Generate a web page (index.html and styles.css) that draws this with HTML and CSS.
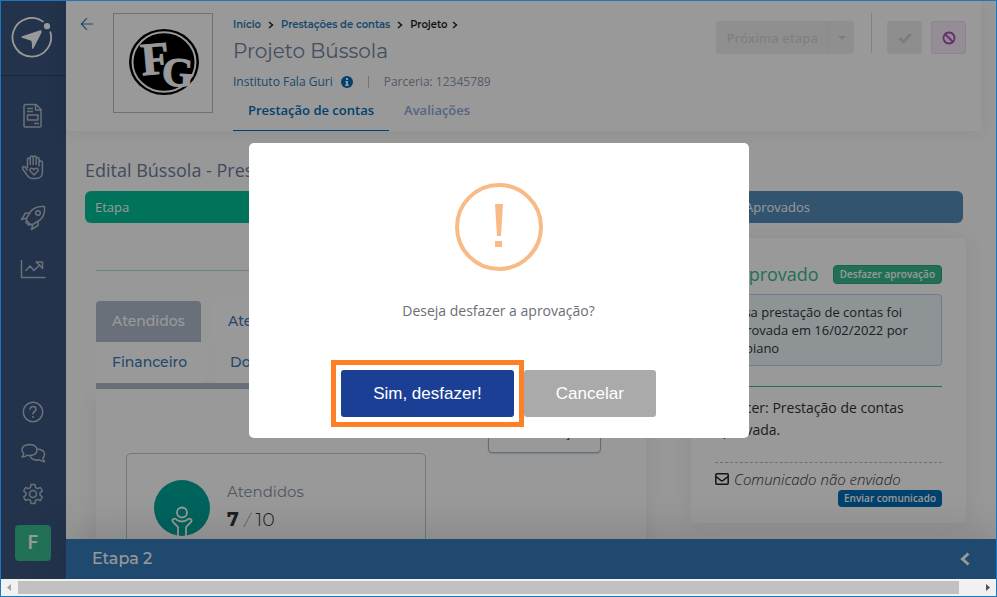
FILE: index.html
```html
<!DOCTYPE html>
<html lang="pt-BR">
<head>
<meta charset="utf-8">
<meta name="viewport" content="width=device-width, initial-scale=1">
<title>Projeto Bússola</title>
<link rel="stylesheet" href="styles.css">
</head>
<body>
<div class="app">
  <nav class="sidebar" aria-label="Menu principal">
    <a class="brand" href="#" aria-label="Página inicial">
      <svg width="42" height="42" viewBox="0 0 42 42" fill="none">
        <path d="M32.500 4.900A19.300 19.300 0 1 0 39.200 14.400" stroke="#fff" stroke-width="1.800"/>
        <circle cx="36" cy="9.200" r="3.100" fill="#fff"/>
        <path d="M29.300 13.300 11 19.200q-1.300.8 0 1.500l8.500 2.800q1.200.6 1.300 2l.3 5.800q.3 1.400 1.300.3l8.100-15.800q.7-3-1.200-2.500z" fill="#fff"/>
      </svg>
    </a>
    <div class="menu">
      <a href="#" aria-label="Editais"><svg width="26" height="26" viewBox="0 0 26 26"><path d="M5.500 1.500h10.500l5 5v16.500q0 1-1 1H5q-1 0-1-1V3q0-1.500 1.500-1.500zM15.500 2v5h5M7 5.500h6M7 8.500h6M7.500 12h10.500v5H7.500zM14 20.500h5"/></svg></a>
      <a href="#" aria-label="Doações"><svg width="26" height="26" viewBox="0 0 26 26"><path d="M7.500 14V5.500q0-1.500 1.400-1.500t1.400 1.500V11M10.300 10V3.500Q10.300 2 11.700 2t1.500 1.500V11M13.200 10V3.500Q13.200 2 14.700 2t1.500 1.500V11M16.200 10V5q0-1.500 1.400-1.500T19 5v7V8.500q0-1.500 1.700-1.500T22.400 8.500V18q0 6.500-6.500 6.500h-3Q9 24.500 7 21L3 15.500q-1-2.500.6-3 1.400-.2 2.400 1.500l1.500 2.500M14 21l-3.700-3.700q-1.300-2 .6-3 1.800-.4 3.100 1.400 1.300-1.800 3.100-1.400 1.900 1 .6 3z"/></svg></a>
      <a href="#" aria-label="Projetos"><svg width="26" height="26" viewBox="0 0 26 26"><path d="M24.500 1.500q-9-.7-13.500 4.500L7 12.500l-1 5 2.500 2.500 5-1L20 15q5.200-4.500 4.500-13.500zM10 8H5.500L1.500 14.500 7 13M18 16v4.500L11.500 24.500 13 19M6.500 15.500l4 4"/><circle cx="18" cy="8" r="2.300"/></svg></a>
      <a href="#" aria-label="Indicadores"><svg width="26" height="26" viewBox="0 0 26 26"><path d="M1.500 4v17.500H25.500M5.500 15l4.500-5 4 4.500 6-6M16 6h6.500v6.500L19.500 9z"/></svg></a>
    </div>
    <div class="menu menu-bottom">
      <a href="#" aria-label="Ajuda"><svg width="26" height="26" viewBox="0 0 26 26"><circle cx="13" cy="13" r="9.700"/><path d="M10 10.800q0-3.300 3-3.300t3 2.700q0 1.500-1.500 2.300T13 14.500v1M13 17v2"/></svg></a>
      <a href="#" aria-label="Conversas"><svg width="26" height="26" viewBox="0 0 26 26"><path d="M2 17q1.600-1.500 1.700-3.500Q2 12 2 10q0-5.200 7.500-5.500Q17 4.800 17 10t-7.500 5.500q-1.300 0-2.600-.3Q5 17 2 17zM17 9q7.500.5 7.500 5.500 0 2-1.700 3.500.2 2.200 1.700 3.700-3 0-5-1.900-7.500 1.500-9.500-4"/></svg></a>
      <a href="#" aria-label="Configurações"><svg width="26" height="26" viewBox="0 0 26 26"><circle cx="13" cy="13" r="3.500"/><path d="M11 3.500h4l.5 3 2 1.100 2.900-1.100 2 3.500-2.400 1.900v2.200l2.400 1.900-2 3.500-2.900-1.100-2 1.100-.5 3h-4l-.5-3-2-1.100-2.900 1.100-2-3.500L6 14.100v-2.200L3.600 10l2-3.500 2.900 1.100 2-1.100z"/></svg></a>
      <button class="avatar" type="button">F</button>
    </div>
  </nav>

  <main class="main">
    <header class="header">
      <a class="back" href="#" aria-label="Voltar"><svg width="14" height="14" viewBox="0 0 14 14"><path d="M13 7H1.500M7 1.200 1.300 7 7 12.800"/></svg></a>
      <div class="org-logo">
        <svg width="72" height="68" viewBox="0 0 72 68">
          <ellipse cx="37" cy="33" rx="35" ry="33" fill="#000"/>
          <ellipse cx="37" cy="33" rx="31.500" ry="29.800" fill="none" stroke="#fff" stroke-width="2"/>
          <text class="logo-letter" x="14" y="45" font-size="46" transform="rotate(-5 28 30)">F</text>
          <text class="logo-letter" x="35" y="57" font-size="41" transform="rotate(3 50 44)">G</text>
        </svg>
      </div>
      <div class="project">
        <div class="crumbs">
          <a href="#">Início</a>
          <svg width="6" height="8" viewBox="0 0 6 8"><path d="m1 1 3.500 3L1 7"/></svg>
          <a href="#">Prestações de contas</a>
          <svg width="6" height="8" viewBox="0 0 6 8"><path d="m1 1 3.500 3L1 7"/></svg>
          <span class="current">Projeto <svg width="6" height="8" viewBox="0 0 6 8"><path d="m1 1 3.500 3L1 7"/></svg></span>
        </div>
        <h1>Projeto Bússola</h1>
        <div class="meta">
          <a href="#">Instituto Fala Guri</a>
          <svg width="12" height="12" viewBox="0 0 12 12"><circle cx="6" cy="6" r="6" fill="#006db8"/><path d="M5 2h2v2H5zM4.500 5H7v3.500h.8V10H4.200V8.500H5v-2h-.5z" fill="#fff"/></svg>
          <span class="sep"></span>
          <span class="partner">Parceria: 12345789</span>
        </div>
        <div class="tabs">
          <a class="tab active" href="#">Prestação de contas</a>
          <a class="tab" href="#">Avaliações</a>
        </div>
      </div>
      <div class="actions">
        <div class="split">
          <button type="button" disabled>Próxima etapa</button>
          <button type="button" class="caret" disabled aria-label="Mais opções"><svg width="8" height="4" viewBox="0 0 8 4"><path d="M0 0h8L4 4z" fill="#d0d0d0"/></svg></button>
        </div>
        <span class="rule"></span>
        <button class="square" type="button" disabled aria-label="Aprovar"><svg width="14" height="12" viewBox="0 0 14 12"><path d="m1.500 6 4 4 7-8" fill="none" stroke="#d0d0d0" stroke-width="3"/></svg></button>
        <button class="square ban" type="button" aria-label="Reprovar"><svg width="14" height="14" viewBox="0 0 14 14"><path d="M7 1.500a5.500 5.500 0 1 0 .01 0zM3 3l8 8" fill="none" stroke="#a552b8" stroke-width="1.800"/></svg></button>
      </div>
    </header>

    <section class="content">
      <h2>Edital Bússola - Prestação de contas</h2>
      <div class="steps">
        <div class="step done">Etapa</div>
        <div class="step">Aprovados</div>
      </div>
      <div class="columns">
        <div class="left">
          <div class="subtabs">
            <a class="subtab selected" href="#">Atendidos</a>
            <a class="subtab" href="#">Atendimentos</a>
          </div>
          <div class="subtabs second">
            <a class="subtab" href="#">Financeiro</a>
            <a class="subtab" href="#">Documentos</a>
          </div>
          <div class="panel">
            <button class="request" type="button">Ver avaliação</button>
            <div class="stat">
              <svg width="56" height="56" viewBox="0 0 56 56"><circle cx="28" cy="28" r="28" fill="#00a59a"/><g fill="none" stroke="#fff" stroke-width="1.800"><circle cx="28" cy="32.500" r="5"/><path d="M24 56V47l-5-5q-1.500-2 .5-3t3.500 1q5 3 10 0 1.500-2 3.500-1t.5 3l-5 5v9"/></g></svg>
              <div>
                <div class="stat-name">Atendidos</div>
                <div class="stat-value"><b>7</b><i>/</i><span>10</span></div>
              </div>
            </div>
          </div>
        </div>
        <aside class="review">
          <div class="review-head"><h3>Aprovado</h3><button class="mini green" type="button">Desfazer aprovação</button></div>
          <p class="notice">Essa prestação de contas foi aprovada em 16/02/2022 por Fabiano</p>
          <p class="opinion">Parecer: Prestação de contas aprovada.</p>
          <div class="mail"><svg width="14" height="12" viewBox="0 0 14 12"><path d="M1.800.8h10.400q1 0 1 1v8.400q0 1-1 1H1.800q-1 0-1-1V1.800q0-1 1-1zM1 3.500l4.800 3.800q1.200.9 2.400 0L13 3.500"/></svg><em>Comunicado não enviado</em></div>
          <button class="mini send" type="button">Enviar comunicado</button>
        </aside>
      </div>
    </section>

    <button class="next-stage" type="button"><span>Etapa 2</span><svg width="10" height="14" viewBox="0 0 10 14"><path d="M8.500 1.500 2.500 7l6 5.500" fill="none" stroke="#fff" stroke-width="3"/></svg></button>
  </main>

  <div class="overlay">
    <div class="modal" role="dialog" aria-modal="true" aria-labelledby="question">
      <div class="warning"><svg width="88" height="88" viewBox="0 0 88 88"><circle cx="44" cy="44" r="42" fill="none" stroke="#f8bb86" stroke-width="4"/><path d="M40 21h8l-2 32h-4zM40 58h7v6h-7z" fill="#f8bb86"/></svg></div>
      <p id="question">Deseja desfazer a aprovação?</p>
      <div class="choices">
        <span class="highlight"><button class="confirm" type="button">Sim, desfazer!</button></span>
        <button class="cancel" type="button">Cancelar</button>
      </div>
    </div>
  </div>
</div>
<div class="scrollbar" aria-hidden="true">
  <svg width="17" height="17" viewBox="0 0 17 17"><path d="M10 5v7L6 8.500z" fill="#a3a3a3"/></svg>
  <span class="thumb"></span>
  <svg width="17" height="17" viewBox="0 0 17 17"><path d="M7 5v7l4-3.500z" fill="#505050"/></svg>
</div>
</body>
</html>
```
FILE: styles.css
```css
* { box-sizing: border-box; }
html, body { height: 100%; }
body {
  --display: Montserrat, Inter, sans-serif;
  margin: 0;
  display: flex;
  flex-direction: column;
  border: 1px solid #1b78bf;
  overflow: hidden;
  font: 13px/18px "Open Sans", sans-serif;
  color: #333;
  background: #fdfdfd;
}
a { color: inherit; text-decoration: none; }
button { font: inherit; color: inherit; border: 0; padding: 0; cursor: pointer; }
h1, h2, h3, p { margin: 0; font-weight: 400; }
svg { display: block; flex: none; }

.app { position: relative; flex: 1; min-height: 0; display: flex; overflow: hidden; }

.sidebar { flex: none; width: 65px; display: flex; flex-direction: column; align-items: stretch; background: #39557d; }
.brand { height: 75px; display: flex; align-items: center; justify-content: center; padding-right: 3px; border-bottom: 1px solid #2b4266; }
.menu { display: flex; flex-direction: column; align-items: center; gap: 25px; padding: 27px 1px 0 0; }
.menu svg { fill: none; stroke: #b3bccb; stroke-width: 1.5; stroke-linejoin: round; }
.menu-bottom { margin-top: auto; gap: 15px; padding: 0 1px 18px 0; }
.avatar { width: 36px; height: 36px; margin-top: 3px; border-radius: 4px; background: #38bd92; color: #fff; font: 600 18px/36px Inter, sans-serif; }

.main { flex: 1; min-width: 0; display: flex; flex-direction: column; }
.header { position: relative; flex: none; display: flex; align-items: flex-start; margin-right: 15px; padding: 12px 15px 0 14px; background: #fff; box-shadow: 0 0 18px rgba(0, 0, 0, .07); }
.back { margin: 4px 19px 0 0; }
.back svg { fill: none; stroke: #2f80bf; stroke-width: 1.2; }
.org-logo { flex: none; width: 100px; height: 100px; display: flex; align-items: center; justify-content: center; border: 1px solid #bbb; }
.logo-letter { font-family: "Liberation Serif", serif; font-weight: 700; fill: #fff; stroke: #fff; stroke-width: 1; }
.project { margin-left: 20px; white-space: nowrap; }
.crumbs { display: flex; align-items: center; gap: 7px; height: 24px; font: 600 10px/24px var(--display); color: #2c79b5; }
.crumbs svg, .mail svg { fill: none; stroke: #222; stroke-width: 1.5; }
.crumbs .current { display: flex; align-items: center; gap: 4px; color: #222; }
h1 { font: 400 20px/28px var(--display); color: #7083a0; }
.meta { display: flex; align-items: center; height: 34px; gap: 8px; font-size: 12px; color: #2c79b5; }
.sep { width: 1px; height: 12px; margin: 0 7px; background: #bcc4d0; }
.partner { color: #8d99ae; }
.tabs { display: flex; font-weight: 600; }
.tab { height: 32px; padding: 2px 15px 0; color: #8ea9d8; }
.tab.active { color: #006db8; border-bottom: 1px solid #006db8; }
.actions { display: flex; align-items: flex-start; margin-left: auto; }
.split { display: flex; margin-top: 8px; height: 33px; border-radius: 3px; background: #efefef; overflow: hidden; }
.split button { padding: 0 10px 0 11px; font-weight: 600; color: #d6d6d6; background: none; }
.split .caret { width: 26px; padding: 0 9px; border-left: 1px solid #e4e4e4; }
.rule { width: 1px; height: 40px; margin: 0 15px 0 17px; background: #d9d9d9; }
.square { width: 35px; height: 33px; margin-top: 8px; display: flex; align-items: center; justify-content: center; border-radius: 3px; background: #ededed; }
.ban { margin-left: 9px; background: #f8ebfa; border: 1px solid #eadcee; }

.content { flex: 1; min-height: 0; padding: 27px 30px 0 19px; overflow: hidden; }
h2 { font-size: 18px; line-height: 24px; color: #6c7f9a; }
.steps { display: flex; margin: 9px 3px 0 0; color: #fff; }
.step { width: 228px; padding: 7px 10px; border-radius: 6px; background: #548cba; }
.step.done { flex: 1; margin-right: 10px; background: #00c096; }
.columns { display: flex; align-items: flex-start; gap: 45px; margin-top: 15px; padding-left: 11px; }
.left { flex: 1; min-width: 0; padding-top: 32px; }
.subtabs { display: flex; gap: 11px; color: #3b79b3; font: 500 14px/41px var(--display); border-top: 1px solid #b5ddd4; padding-top: 30px; }
.subtabs.second { border-top: 0; padding-top: 0; border-bottom: 6px solid #b1bbcb; }
.subtab { min-width: 105px; padding: 0 16px; background: #fff; }
.subtab.selected { border-radius: 4px 4px 0 0; background: #b1bbcb; color: #fff; }
.panel { display: flex; flex-direction: column; align-items: flex-start; height: 300px; padding: 23px 30px 0; background: #fff; box-shadow: 0 8px 20px rgba(0, 0, 0, .07); }
.request { align-self: flex-end; width: 113px; height: 41px; margin-right: 15px; padding-bottom: 2px; border: 1px solid #92bad8; border-radius: 4px; background: #fff; color: #006db8; font-weight: 600; box-shadow: 0 1px 2px rgba(0, 0, 0, .15); }
.stat { display: flex; align-items: center; gap: 17px; width: 300px; height: 110px; padding-left: 27px; border: 1px solid #b6cbd4; border-radius: 5px; }
.stat-name { font: 400 15px/24px var(--display); color: #8791a6; }
.stat-value { display: flex; align-items: center; gap: 6px; font: 300 19px/32px var(--display); }
.stat-value i { font-size: 15px; color: #8791a6; }
.stat-value b { font-weight: 700; }
.review { flex: none; width: 275px; padding: 24px 24px 16px; display: flex; flex-direction: column; background: #fff; border-radius: 4px; box-shadow: 0 0 22px rgba(0, 0, 0, .07); }
.review-head { display: flex; align-items: center; justify-content: flex-end; gap: 14px; }
h3 { font-size: 18px; line-height: 24px; color: #38ba91; }
.mini { padding: 0 6px; border-radius: 4px; color: #fff; font-size: 10px; font-weight: 600; line-height: 17px; }
.green { border: 1px solid #2da680; background: #38ba91; }
.notice { margin-top: 8px; padding: 8px 15px; border: 1px solid #b7cdf2; border-radius: 4px; background: #edf6fb; }
.opinion { margin-top: 20px; padding: 10px 0 21px; font-size: 14px; line-height: 22px; border-top: 1px solid #38ba91; border-bottom: 1px dashed #b3b9c8; }
.mail { display: flex; align-items: center; gap: 5px; padding-top: 5px; font-size: 15px; font-weight: 300; line-height: 22px; }
.send { align-self: flex-end; background: #006db8; }

.next-stage { position: relative; flex: none; display: flex; align-items: center; justify-content: space-between; height: 40px; padding: 0 26px; background: #357ab9; color: #fff; font: 500 16px/40px var(--display); box-shadow: 0 -6px 40px rgba(0, 0, 0, .15); }

.overlay { position: absolute; inset: 0; display: flex; align-items: center; justify-content: center; background: rgba(0, 0, 0, .4); }
.modal { width: 500px; max-width: 100%; padding: 40px 20px 21px; border-radius: 5px; background: #fff; display: flex; flex-direction: column; align-items: center; }
.modal p { margin: 29px 0 48px; font-size: 14px; line-height: 22px; color: #6a6e74; }
.choices { display: flex; gap: 10px; font: 17px/47px "Liberation Sans", sans-serif; color: #fff; }
.choices button { display: block; padding: 0 32px; border-radius: 3px; }
.confirm { background: #1c3f96; }
.cancel { background: #aaa; }
.highlight { outline: 5px solid #ff7f27; outline-offset: 5px; }

.scrollbar { flex: none; height: 17px; display: flex; align-items: center; background: #f1f1f1; }
.thumb { flex: 1; height: 13px; margin-right: 20px; background: #c1c1c1; }
```
